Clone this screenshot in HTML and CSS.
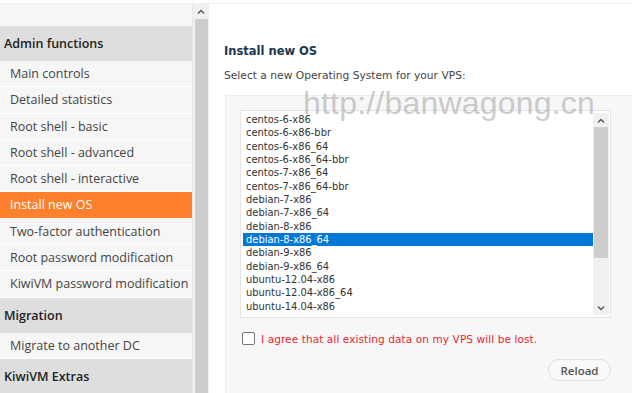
FILE: index.html
```html
<!DOCTYPE html>
<html>
<head>
<meta charset="utf-8">
<link rel="stylesheet" href="styles.css">
</head>
<body>
<div class="topbar"></div>
<div class="layout">
  <nav class="sidebar">
    <div class="side-gap"></div>
    <div class="side-head">Admin functions</div>
    <div class="side-item">Main controls</div>
    <div class="side-item">Detailed statistics</div>
    <div class="side-item">Root shell - basic</div>
    <div class="side-item">Root shell - advanced</div>
    <div class="side-item">Root shell - interactive</div>
    <div class="side-item active">Install new OS</div>
    <div class="side-item">Two-factor authentication</div>
    <div class="side-item">Root password modification</div>
    <div class="side-item">KiwiVM password modification</div>
    <div class="side-head">Migration</div>
    <div class="side-item">Migrate to another DC</div>
    <div class="side-head">KiwiVM Extras</div>
  </nav>
  <div class="side-scroll">
    <div class="arrow-btn">
      <svg width="8" height="5" viewBox="0 0 8 5"><path d="M1 4.5 L4 1.5 L7 4.5" fill="none" stroke="#555" stroke-width="1.4"/></svg>
    </div>
    <div class="side-thumb"></div>
  </div>
  <main class="main">
    <h2 class="title">Install new OS</h2>
    <p class="lead">Select a new Operating System for your VPS:</p>
    <div class="panel">
      <div class="listbox">
        <ul class="options">
          <li>centos-6-x86</li>
          <li>centos-6-x86-bbr</li>
          <li>centos-6-x86_64</li>
          <li>centos-6-x86_64-bbr</li>
          <li>centos-7-x86_64</li>
          <li>centos-7-x86_64-bbr</li>
          <li>debian-7-x86</li>
          <li>debian-7-x86_64</li>
          <li>debian-8-x86</li>
          <li class="selected">debian-8-x86_64</li>
          <li>debian-9-x86</li>
          <li>debian-9-x86_64</li>
          <li>ubuntu-12.04-x86</li>
          <li>ubuntu-12.04-x86_64</li>
          <li>ubuntu-14.04-x86</li>
        </ul>
        <div class="list-scroll">
          <div class="arrow-btn small">
            <svg width="8" height="5" viewBox="0 0 8 5"><path d="M1 4.5 L4 1.5 L7 4.5" fill="none" stroke="#555" stroke-width="1.4"/></svg>
          </div>
          <div class="list-thumb"></div>
          <div class="list-track"></div>
          <div class="arrow-btn small">
            <svg width="8" height="5" viewBox="0 0 8 5"><path d="M1 0.5 L4 3.5 L7 0.5" fill="none" stroke="#555" stroke-width="1.4"/></svg>
          </div>
        </div>
      </div>
      <label class="agree">
        <span class="checkbox"></span>
        <span class="agree-text">I agree that all existing data on my VPS will be lost.</span>
      </label>
      <div class="actions">
        <button class="reload">Reload</button>
      </div>
    </div>
    <div class="watermark">http://banwagong.cn</div>
  </main>
</div>
</body>
</html>
```

FILE: styles.css
```css
* { box-sizing: border-box; }
html, body { margin: 0; padding: 0; background: #fff; }
body { width: 632px; height: 393px; overflow: hidden; }

.topbar { height: 4px; background: #fff; border-bottom: 1px solid #efefef; }

.layout { display: flex; height: 389px; overflow: hidden; }

.sidebar {
  width: 194px;
  background: #f6f6f6;
  border-right: 1px solid #e6e6e6;
  font-family: "Open Sans", "Noto Sans", sans-serif;
  font-size: 12.5px;
  color: #444;
}
.side-gap { height: 22px; }
.side-head {
  height: 35px;
  line-height: 35px;
  padding-left: 4px;
  background: #dedede;
  font-weight: 600;
  color: #222;
}
.side-item {
  height: 26.3px;
  line-height: 26.3px;
  padding-left: 10px;
  white-space: nowrap;
  border-bottom: 1px solid #fff;
}
.side-item.active { background: #fd802c; color: #fff; }

.side-scroll {
  width: 16px;
  background: #f0f0f0;
  display: flex;
  flex-direction: column;
  align-items: center;
}
.arrow-btn {
  height: 15px;
  width: 15px;
  display: flex;
  align-items: center;
  justify-content: center;
}
.side-thumb { width: 13px; flex: 1; background: #cdcdcd; }

.main {
  flex: 1;
  position: relative;
  padding: 36px 0 0 15px;
  font-family: "DejaVu Sans", Verdana, sans-serif;
}
.title {
  margin: 0;
  font-size: 11.5px;
  font-weight: bold;
  color: #1d3650;
  line-height: 22px;
}
.lead {
  margin: 6px 0 0 0;
  font-size: 10.7px;
  color: #444;
  line-height: 16px;
}
.panel {
  margin-top: 11px;
  margin-left: 1px;
  background: #f7f7f7;
  border: 1px solid #ededed;
  border-right: none;
  border-bottom: none;
  height: 298px;
  padding: 14px 21px 0 14px;
}
.listbox {
  display: flex;
  background: #fff;
  border: 1px solid #e4e4e4;
  height: 208px;
  width: 371px;
  padding: 2px 1px 2px 2px;
}
.options {
  list-style: none;
  margin: 0;
  padding: 0;
  flex: 1;
  font-family: "DejaVu Sans Condensed", "DejaVu Sans", Tahoma, sans-serif;
  font-stretch: condensed;
  font-size: 11px;
  color: #333;
}
.options li {
  height: 13.35px;
  line-height: 13.35px;
  padding-left: 3px;
  white-space: nowrap;
}
.options li.selected { background: #0078d7; color: #fff; }

.list-scroll {
  width: 16px;
  background: #f0f0f0;
  display: flex;
  flex-direction: column;
  align-items: center;
}
.arrow-btn.small { height: 14px; }
.list-thumb { width: 14px; height: 131px; background: #cdcdcd; }
.list-track { flex: 1; }

.agree {
  display: flex;
  align-items: center;
  margin-top: 14px;
  margin-left: 2px;
}
.checkbox {
  width: 13px;
  height: 13px;
  border: 1px solid #767676;
  border-radius: 2px;
  background: #fff;
}
.agree-text {
  margin-left: 6px;
  font-size: 10.5px;
  color: #ea2630;
  letter-spacing: 0.1px;
}
.actions {
  display: flex;
  justify-content: flex-end;
  margin-top: 14px;
  width: 371px;
}
.reload {
  width: 63px;
  height: 22px;
  border: 1px solid #e0e0e0;
  border-radius: 11px;
  background: #f9f9f9;
  font-family: "Open Sans", sans-serif;
  font-weight: 600;
  font-size: 11.5px;
  color: #555;
  padding: 0;
}

.watermark {
  position: absolute;
  left: 94px;
  top: 81px;
  font-family: "Liberation Sans", Arial, sans-serif;
  font-size: 32px;
  color: rgba(170, 170, 170, 0.6);
  letter-spacing: 0.2px;
  white-space: nowrap;
}
```
